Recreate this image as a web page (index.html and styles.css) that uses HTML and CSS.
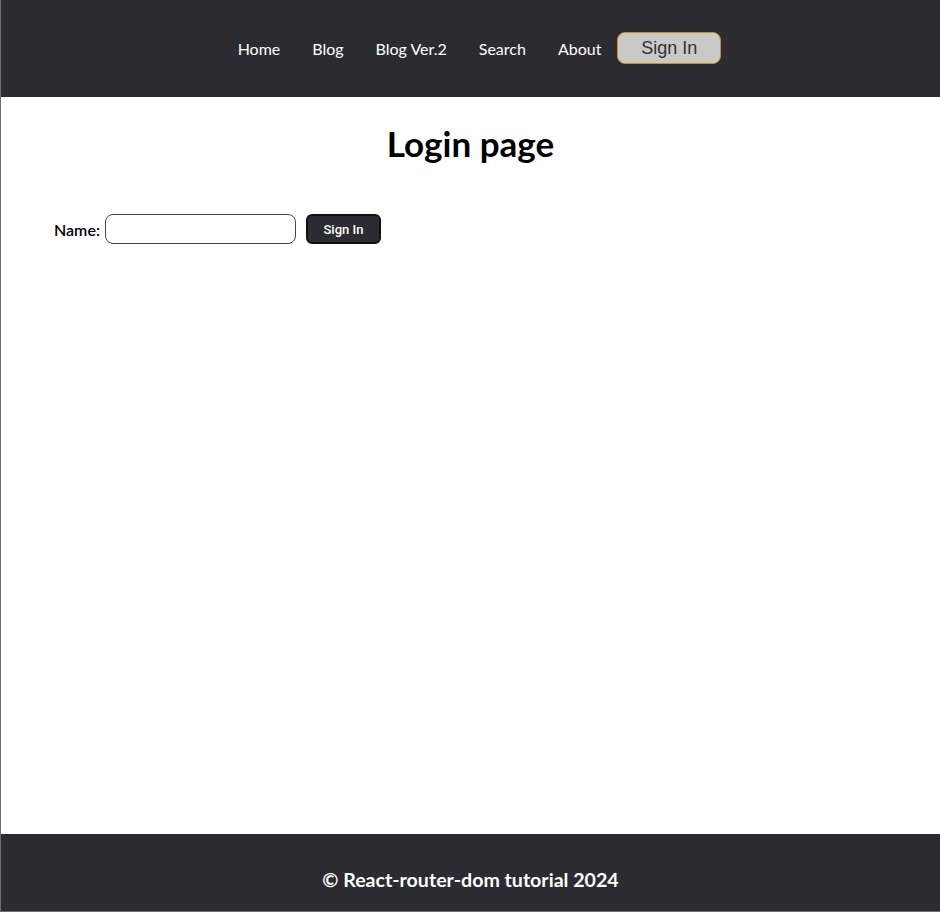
FILE: index.html
```html
<!DOCTYPE html>
<html lang="en">
<head>
<meta charset="utf-8">
<title>Login page</title>
<link rel="stylesheet" href="styles.css">
</head>
<body>
<div class="app">
  <header class="header">
    <nav class="nav">
      <a class="nav-link" href="#">Home</a>
      <a class="nav-link" href="#">Blog</a>
      <a class="nav-link" href="#">Blog Ver.2</a>
      <a class="nav-link" href="#">Search</a>
      <a class="nav-link" href="#">About</a>
      <button class="nav-signin" type="button">Sign In</button>
    </nav>
  </header>
  <main class="main">
    <h1 class="title">Login page</h1>
    <form class="login-form">
      <label class="label" for="name">Name:</label>
      <input class="input" id="name" type="text">
      <button class="submit" type="button">Sign In</button>
    </form>
  </main>
  <footer class="footer">
    <p class="footer-text">© React-router-dom tutorial 2024</p>
  </footer>
</div>
</body>
</html>
```
FILE: styles.css
```css
html, body {
  margin: 0;
  padding: 0;
  background: #ffffff;
}
body {
  font-family: Lato, "Open Sans", sans-serif;
}
.app {
  box-sizing: border-box;
  height: 912px;
  display: flex;
  flex-direction: column;
  border-left: 1px solid #6e6e6e;
  border-bottom: 1px solid #6e6e6e;
}
.header {
  height: 97px;
  flex: none;
  background: #2c2b32;
  display: flex;
  align-items: center;
  justify-content: center;
}
.nav {
  display: flex;
  align-items: center;
  gap: 32px;
  margin-left: 18px;
  margin-top: -1px;
}
.nav-link {
  color: #ffffff;
  text-decoration: none;
  font-family: Lato, sans-serif;
  font-size: 16px;
}
.nav-signin {
  margin-left: -16px;
  width: 104px;
  height: 32px;
  box-sizing: border-box;
  background: #c9c9c9;
  border: 1px solid #d68f12;
  border-radius: 8px;
  color: #333333;
  font-family: "Liberation Sans", Arial, sans-serif;
  font-size: 18px;
  padding: 0;
  margin-top: 0;
}
.main {
  flex: 1;
  padding: 0 53px;
}
.title {
  margin: 25px 0 0;
  text-align: center;
  font-family: Lato, sans-serif;
  font-weight: 700;
  font-size: 35px;
  line-height: 42px;
  color: #000;
}
.login-form {
  display: flex;
  align-items: center;
  margin-top: 50px;
}
.label {
  font-family: Lato, sans-serif;
  font-weight: 600;
  font-size: 16px;
  color: #000;
  margin-right: 5px;
  margin-top: 1px;
}
.input {
  box-sizing: border-box;
  width: 191px;
  height: 30px;
  border: 1px solid #444;
  border-radius: 8px;
  padding: 0 6px;
  margin: 0;
}
.submit {
  margin-left: 10px;
  box-sizing: border-box;
  width: 75px;
  height: 30px;
  background: #2c2b32;
  border: 2px solid #111;
  border-radius: 6px;
  color: #fff;
  font-family: Roboto, sans-serif;
  font-weight: 500;
  font-size: 13px;
  padding: 0;
}
.footer {
  height: 77px;
  flex: none;
  background: #2c2b32;
  display: flex;
  align-items: center;
  justify-content: center;
}
.footer-text {
  margin: 13px 0 0;
  color: #fff;
  font-family: Lato, sans-serif;
  font-weight: 700;
  font-size: 19.6px;
}
```
